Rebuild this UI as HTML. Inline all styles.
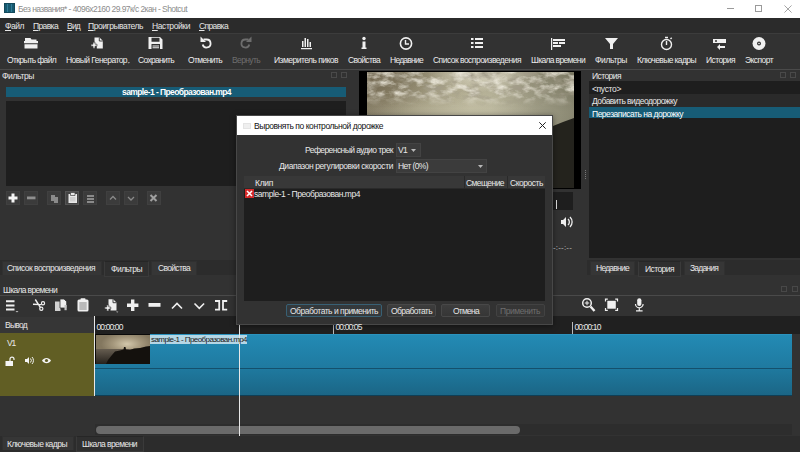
<!DOCTYPE html>
<html lang="ru"><head><meta charset="utf-8"><title>Shotcut</title>
<style>
html,body{margin:0;padding:0;}
body{width:800px;height:452px;overflow:hidden;position:relative;background:#323232;font-family:"Liberation Sans",sans-serif;font-size:9.5px;color:#dcdcdc;}
div,span,svg{position:absolute;box-sizing:border-box;}
.t{white-space:nowrap;line-height:14px;height:14px;}
u{text-decoration:underline;text-underline-offset:1px;}
#titlebar{left:0;top:0;width:800px;height:18px;background:#fff;}
#menubar{left:0;top:18px;width:800px;height:15px;background:#2b2b2b;}
#toolbar{left:0;top:33px;width:800px;height:37px;background:#323232;border-top:1px solid #3c3c3c;border-bottom:1px solid #4a4a4a;}
.dark{background:#1e1e1e;}
.sel{background:#175c76;}
.tab{background:#363636;border:1px solid #303030;border-bottom:none;}
.tabsel{background:#2f2f2f;border:1px solid #3a3a3a;border-top-color:#262626;}
.fbtn{top:191px;width:14px;height:14px;background:#3b3b3b;border:1px solid #404040;}
.btn{top:304px;height:13px;background:linear-gradient(#3d3d3d,#363636);border:1px solid #484848;border-radius:2px;}
.combo{background:#3b3b3b;border:1px solid #434343;}

</style></head><body>
<div id="titlebar"></div>
<!-- app icon -->
<div style="left:4px;top:3px;width:11px;height:10px;background:#185a70;border:1px solid #134a5c;"></div>
<div style="left:7px;top:4px;width:1px;height:8px;background:#2f7c98;"></div>
<div style="left:11px;top:4px;width:1px;height:8px;background:#2f7c98;"></div>
<!-- window controls -->
<div style="left:727px;top:8px;width:7px;height:1px;background:#9a9a9a;"></div>
<div style="left:755px;top:5px;width:7px;height:7px;border:1px solid #9a9a9a;"></div>
<svg style="left:784px;top:5px" width="8" height="8" viewBox="0 0 9 9"><path d="M0.5 0.5L8.5 8.5M8.5 0.5L0.5 8.5" stroke="#9a9a9a" stroke-width="1" fill="none"/></svg>
<div id="menubar"></div>
<div id="toolbar"></div>

<!-- toolbar icons -->
<svg id="tbicons" style="left:0;top:33px" width="800" height="37" viewBox="0 0 800 37">
<g fill="#f0f0f0" stroke="none">
 <!-- open file -->
 <path d="M25 5h5.500l1 1.500h5v1.500H25z"/><path d="M24 8h14v2.300H24zM24.500 11.300h13v4.200h-13z"/>
 <!-- new generator -->
 <path d="M94.500 4.500h5l3.300 3.300v7.700h-6v-3.300h-2.300z"/><path d="M99.300 4.500v3.500h3.500" fill="none" stroke="#323232" stroke-width="0.900"/><path d="M91 11.200h2v-2h2v2h2v2h-2v2h-2v-2h-2z" stroke="#323232" stroke-width="0.600"/><path d="M127.500 29.300h2.600l-1.300 1.300z" fill="#bbb"/>
 <!-- save -->
 <path d="M148.500 4h11.500l2.500 2.500v9.500h-14zM151.500 4.800v4h8v-4zM151.500 11v5h8.500v-5z" fill-rule="evenodd"/><path d="M152.500 12.500h6.500v1h-6.500zM152.500 14.300h6.500v1h-6.500z"/>
</g>
<g fill="none" stroke="#f0f0f0" stroke-width="1.8">
 <!-- undo -->
 <path d="M203.5 6.5h3a4 4 0 1 1 -3.8 5"/>
 <!-- clock -->
 <circle cx="406" cy="10.500" r="5.600" stroke-width="1.600"/>
 <path d="M405.500 7v4h3.500" stroke-width="1.400"/>
</g>
<path d="M200.500 3.500v5.500h5.500z" fill="#f0f0f0"/>
<g fill="none" stroke="#6e6e6e" stroke-width="1.800">
 <path d="M248.500 6.500h-3a4 4 0 1 0 3.800 5"/>
</g>
<path d="M251.500 3.500v5.500h-5.500z" fill="#6e6e6e"/>
<g fill="#f0f0f0">
 <!-- peak meter -->
 <path d="M302 8h1.500v6H302zM304.500 5h1.500v9h-1.500zM307 6h1.500v8H307zM309.500 9h1.500v5h-1.500zM301 15h11v1.300h-11z"/>
 <!-- info -->
 <circle cx="364" cy="5.500" r="1.700"/><path d="M362.500 8.500h3v6h1v1.500h-5v-1.500h1z"/>
 <!-- playlist -->
 <path d="M471 5h2.500v2H471zM475 5h8v2h-8zM471 9h2.500v2H471zM475 9h8v2h-8zM471 13h2.500v2H471zM475 13h8v2h-8z"/>
 <!-- timeline -->
 <path d="M551 5h1.200v12H551zM553 6h12v2h-12zM553 9h5v2h-5zM559 9h6v2h-6zM553 12h8v2h-8z"/>
 <!-- filter -->
 <path d="M605 5h13l-5 6v5h-3v-5z"/>
 <!-- history -->
 <path d="M713 6h13v4h-13zM720 11l-3 3l3 3v-2h5v-2h-5z"/>
 <circle cx="716" cy="8" r="1" fill="#323232"/>
 <!-- export disc -->
 <circle cx="759" cy="10.500" r="6.500"/>
</g>
<circle cx="759" cy="10.500" r="2" fill="#323232"/><circle cx="759" cy="10.500" r="0.800" fill="#f0f0f0"/>
<!-- keyframes stopwatch -->
<g fill="none" stroke="#f0f0f0" stroke-width="1.400">
 <circle cx="666.500" cy="11.500" r="5"/><path d="M666.500 8v4"/><path d="M665 4.500h3M670.500 6l1.200-1.200" />
</g>
</svg>

<!-- Filters panel -->
<div class="dark" style="left:6px;top:101px;width:340px;height:85px;"></div>
<div class="sel" style="left:6px;top:87px;width:340px;height:10px;"></div>
<div style="left:331px;top:72px;width:6px;height:6px;border:1px solid #4a4a4a;"></div>
<div style="left:341px;top:72px;width:6px;height:6px;border:1px solid #4a4a4a;"></div>
<!-- filter buttons -->
<div class="fbtn" style="left:6px;"></div>
<div class="fbtn" style="left:24px;"></div>
<div class="fbtn" style="left:47px;"></div>
<div class="fbtn" style="left:65px;background:#444;border-color:#555"></div>
<div class="fbtn" style="left:83px;"></div>
<div class="fbtn" style="left:106px;"></div>
<div class="fbtn" style="left:124px;"></div>
<div class="fbtn" style="left:147px;"></div>
<svg style="left:0;top:191px" width="170" height="14" viewBox="0 0 170 14">
 <path d="M11.500 2.500h3v3h3v3h-3v3h-3v-3h-3v-3h3z" fill="#f5f5f5"/>
 <path d="M27 5.500h8.500v2.800h-8.500z" fill="#8f8f8f"/>
 <path d="M51 4h4v6h-4zM54 6h4v6h-4z" fill="#8a8a8a"/>
 <path d="M68.500 3h8.500v9h-8.500z" fill="#e8e8e8"/><path d="M70.500 1.500h4.500v3h-4.500z" fill="#e8e8e8" stroke="#444" stroke-width="0.700"/><path d="M70 6h5.500v4.500h-5.500z" fill="#cfcfcf"/>
 <path d="M87 4h7v2h-7zM87 7h7v2h-7zM87 10h7v2h-7z" fill="#8a8a8a"/>
 <path d="M110 8.500l3-3l3 3" stroke="#8a8a8a" stroke-width="1.300" fill="none"/>
 <path d="M128 6l3 3l3-3" stroke="#8a8a8a" stroke-width="1.300" fill="none"/>
 <path d="M150.500 4l6 6M156.500 4l-6 6" stroke="#a0a0a0" stroke-width="2" fill="none"/>
</svg>
<!-- tabs left -->
<div style="left:0;top:260px;width:357px;height:15px;background:#2c2c2c;"></div>

<div class="tab" style="left:2px;top:261px;width:100px;height:14px;"></div>
<div class="tabsel" style="left:104px;top:261px;width:45px;height:16px;"></div>
<div class="tab" style="left:151px;top:261px;width:46px;height:14px;"></div>

<!-- video -->
<div style="left:359px;top:71px;width:222px;height:118px;background:#000;"></div>
<div id="sky" style="left:367px;top:72px;width:207px;height:116px;overflow:hidden;background:
 linear-gradient(180deg, rgba(40,30,10,.10) 0%, rgba(0,0,0,0) 22%, rgba(255,255,235,.06) 34%, rgba(255,255,235,.0) 100%),
 radial-gradient(ellipse 56px 20px at 116px 0px, #ebe7d4 0%, rgba(235,231,212,0) 100%),
 radial-gradient(ellipse 90px 22px at 85px 46px, rgba(200,196,170,.5) 0%, rgba(200,196,170,0) 100%),
 radial-gradient(ellipse 70px 50px at 0px 0px, rgba(110,98,76,.7) 0%, rgba(110,98,76,0) 100%),
 linear-gradient(90deg, #877f66 0%, #9a9378 20%, #b9b499 50%, #b7b399 60%, #9b9881 80%, #83816b 100%);">
 <svg style="left:0;top:0" width="207" height="116" viewBox="0 0 207 116">
  <defs>
   <filter id="cl" x="0" y="0" width="100%" height="100%"><feTurbulence type="fractalNoise" baseFrequency="0.07 0.14" numOctaves="4" seed="7"/><feColorMatrix type="matrix" values="0 0 0 0 0.36  0 0 0 0 0.33  0 0 0 0 0.25  2.6 0 0 0 -1.1"/></filter>
   <filter id="cl2" x="0" y="0" width="100%" height="100%"><feTurbulence type="fractalNoise" baseFrequency="0.08 0.15" numOctaves="4" seed="23"/><feColorMatrix type="matrix" values="0 0 0 0 0.84  0 0 0 0 0.81  0 0 0 0 0.71  0 2.2 0 0 -0.95"/></filter>
   <linearGradient id="fade" x1="0" y1="0" x2="0" y2="1"><stop offset="0" stop-color="#fff"/><stop offset="0.18" stop-color="#fff"/><stop offset="0.30" stop-color="#000"/></linearGradient>
   <mask id="mk"><rect width="207" height="116" fill="url(#fade)"/></mask>
  </defs>
  <g mask="url(#mk)"><rect width="207" height="116" filter="url(#cl)"/><rect width="207" height="116" filter="url(#cl2)"/></g>
  <path d="M207 46 L196 50 L186 54 L176 60 L160 66 L140 74 L120 82 L100 92 L90 116 L207 116z" fill="#24231d"/>
 </svg>
</div>
<!-- splitter dots -->
<div style="left:585px;top:170px;width:1px;height:10px;background:repeating-linear-gradient(#777 0 1px,transparent 1px 2px);"></div>

<!-- player bits right of dialog -->
<div style="left:553px;top:192px;width:20px;height:18px;background:#1e1e1e;"></div>
<div style="left:556px;top:200px;width:1px;height:9px;background:#ddd;"></div>
<svg style="left:560px;top:214px" width="16" height="16" viewBox="0 0 16 16"><path d="M1 6h2l3-3v10l-3-3H1z" fill="#eee"/><path d="M8 5a4 4 0 0 1 0 6M10 3a7 7 0 0 1 0 10" stroke="#eee" stroke-width="1.300" fill="none"/></svg>

<!-- History panel -->
<div class="dark" style="left:589px;top:81px;width:211px;height:177px;"></div>
<div style="left:589px;top:94px;width:211px;height:13px;background:#2a2a2a;"></div>
<div class="sel" style="left:589px;top:107px;width:211px;height:11px;"></div>
<div style="left:780px;top:72px;width:6px;height:6px;border:1px solid #4a4a4a;"></div>
<div style="left:790px;top:72px;width:6px;height:6px;border:1px solid #4a4a4a;"></div>
<div style="left:587px;top:260px;width:213px;height:15px;background:#2c2c2c;"></div>
<div class="tab" style="left:590px;top:261px;width:45px;height:14px;"></div>
<div class="tabsel" style="left:638px;top:261px;width:43px;height:16px;"></div>
<div class="tab" style="left:684px;top:261px;width:41px;height:14px;"></div>

<!-- Timeline -->
<div style="left:0;top:295px;width:800px;height:1px;background:#4a4a4a;"></div>
<div style="left:781px;top:286px;width:6px;height:6px;border:1px solid #484848;"></div>
<div style="left:792px;top:286px;width:6px;height:6px;border:1px solid #484848;"></div>
<svg style="left:0;top:297px" width="800" height="20" viewBox="0 0 800 20">
<g fill="#f0f0f0">
 <path d="M6 3.300h8.500v2H6zM6 7.500h8.500v2H6zM6 11.500h8.500v2H6z"/><path d="M15.500 14h3l-1.500 1.500z" fill="#bbb"/>
 <!-- copy -->
 <path d="M55 4.500h5.500v9.500H55z" fill="#d0d0d0"/><path d="M60 2h4l2.700 2.700V11h-6.700z" stroke="#323232" stroke-width="0.800"/><path d="M64.500 8h2.200v5.200h-2.200z" fill="#c4c4c4"/>
 <!-- paste -->
 <rect x="77.500" y="2.500" width="11" height="12" rx="1.500"/><rect x="79.300" y="5" width="7.400" height="8" fill="#b9b9b9"/><rect x="80.500" y="1.300" width="5" height="2.600" rx="0.800"/>
 <!-- append -->
 <path d="M108.500 2.200h4.700l3.300 3.300v8h-6v-3.500h-2z"/><path d="M113 2.200v3.500h3.500" fill="none" stroke="#323232" stroke-width="0.900"/>
 <path d="M104.800 10h2v-2h2v2h2v2h-2v2h-2v-2h-2z" stroke="#323232" stroke-width="0.600"/>
 <path d="M116 14.500h2.400l-1.200 1.200z" fill="#bbb"/>
 <!-- plus minus -->
 <path d="M131 2.500h3.400v4h4v3.400h-4v4h-3.400v-4h-4v-3.400h4z"/>
 <path d="M148.500 6h12v3.800h-12z"/>
</g>
<g fill="none" stroke="#f0f0f0" stroke-width="1.500">
 <!-- scissors -->
 <path d="M33 7.300L41.300 7.600M35.300 2.500L40.300 10.300" stroke-width="1.400"/><circle cx="43" cy="6.200" r="1.600" stroke-width="1.200"/><circle cx="41.300" cy="11.800" r="1.600" stroke-width="1.200"/>
 <path d="M172 11.500l5-5l5 5" stroke-width="1.600"/>
 <path d="M194.500 6.500l4.800 4.800l4.800-4.800" stroke-width="1.600"/>
 <path d="M215 4h4.200v8.700h-4.200M227.200 4h-4.200v8.700h4.200" stroke-width="1.800"/>
 <circle cx="587" cy="6" r="4.300"/><path d="M590.500 9.500l4 4.500" stroke-width="2.400"/><path d="M584.800 6h4.400M587 3.800v4.400" stroke-width="1"/>
 <path d="M605.500 4.500v-2.300h2.300M617.500 4.500v-2.300h-2.300M605.500 11v2.300h2.300M617.500 11v2.300h-2.300" stroke-width="1.200"/>
 <path d="M635.500 7a3.800 3.800 0 0 0 7.600 0M639.300 11v2.500M636 13.800h6.600" stroke-width="1.200"/>
</g>
<rect x="607.300" y="3.800" width="8.500" height="7.900" fill="#f0f0f0"/>
<rect x="637.200" y="1.200" width="4.200" height="7.800" rx="2.100" fill="#f0f0f0"/>
</svg>
<!-- ruler -->
<div style="left:95px;top:316px;width:705px;height:18px;background:#202020;"></div>
<div style="left:0;top:317px;width:94px;height:16px;background:#363636;"></div>
<div style="left:333px;top:322px;width:1px;height:12px;background:#bbb;"></div>
<div style="left:572px;top:322px;width:1px;height:12px;background:#bbb;"></div>
<!-- track header -->
<div style="left:0;top:333px;width:94px;height:63px;background:#615e24;"></div>
<svg style="left:0;top:352px" width="60" height="16" viewBox="0 0 60 16">
 <g fill="#f4f4f4"><path d="M5.500 9h7.500v5H5.500z"/><path d="M28 7h2l2-2v7l-2-2h-2z" transform="translate(-3,0)"/><path d="M42 8.500c2-3.500 7-3.500 9 0c-2 3.500-7 3.500-9 0z"/></g>
 <path d="M10 9v-1.800a2 2 0 0 1 4 0v0.800" stroke="#f4f4f4" stroke-width="1.200" fill="none"/>
 <path d="M30.500 6.500a3 3 0 0 1 0 4M32 5a5 5 0 0 1 0 7" stroke="#f4f4f4" stroke-width="1" fill="none"/>
 <circle cx="46.500" cy="8.500" r="1.600" fill="#615e24"/>
</svg>
<div style="left:94px;top:316px;width:1px;height:80px;background:#e8e8e8;"></div>
<!-- clip -->
<div style="left:95px;top:333.5px;width:697px;height:62.5px;background:linear-gradient(#238ab4 0%,#1f7ba1 52%,#1b6686 100%);border-top:1px solid #2b93be;border-bottom:1px solid #0f3f56;"></div>
<div style="left:95px;top:368px;width:697px;height:1px;background:#14506c;"></div>
<div style="left:95px;top:334px;width:55px;height:30px;background:#0a0a0a;"></div>
<div style="left:96px;top:335px;width:54px;height:29px;overflow:hidden;background:radial-gradient(ellipse 26px 12px at 31px 9px,#d2c7ab 0%,#a4977c 55%,#83775f 100%);">
 <svg style="left:0;top:0" width="54" height="29" viewBox="0 0 54 29"><defs><linearGradient id="sea" x1="0" y1="0" x2="0" y2="1"><stop offset="0" stop-color="#665d50"/><stop offset="1" stop-color="#26221d"/></linearGradient></defs><rect x="0" y="14" width="54" height="15" fill="url(#sea)"/><path d="M10 29L12 25L16 20L19 16.500L24 15.500L27.500 14.500L28 12L29.500 12L30 14.500L34 15L38 13.500L44 13L50 11.500L54 11V29z" fill="#14110d"/></svg>
</div>
<div style="left:150px;top:335px;width:97px;height:9px;background:rgba(214,232,240,.82);"></div>
<!-- scrollbar -->
<div style="left:95px;top:424px;width:697px;height:11px;background:#2d2d2d;"></div>
<div style="left:96px;top:426px;width:424px;height:8px;border-radius:4px;background:#6a6a6a;"></div>
<!-- bottom tabs -->
<div style="left:0;top:436px;width:800px;height:16px;background:#2c2c2c;"></div>

<div class="tab" style="left:2px;top:436px;width:72px;height:14px;"></div>
<div class="tabsel" style="left:76px;top:436px;width:68px;height:16px;"></div>
<!-- playhead -->
<div style="left:239px;top:318px;width:1px;height:118px;background:#e8e8e8;"></div>

<!-- Dialog -->
<div id="dlg" style="left:236px;top:115px;width:317px;height:210px;background:#323232;border:1px solid #484848;box-shadow:0 1px 6px rgba(0,0,0,.45);">
 <div style="left:0;top:0;width:315px;height:19px;background:#fff;"></div>
 <div style="left:6px;top:7px;width:8px;height:6px;background:#efefef;border:1px solid #e4e4e4;"></div>
 <svg style="left:302px;top:6px" width="7" height="7" viewBox="0 0 7 7"><path d="M0.300 0.300l6.400 6.400M6.700 0.300l-6.400 6.400" stroke="#222" stroke-width="1" fill="none"/></svg>
</div>
<div class="combo" style="left:396px;top:143px;width:25px;height:14px;"></div>
<div class="combo" style="left:396px;top:159px;width:91px;height:14px;"></div>
<svg style="left:411px;top:149px" width="5" height="3" viewBox="0 0 5 3"><path d="M0 0h5l-2.500 3z" fill="#b8b8b8"/></svg>
<svg style="left:478px;top:165px" width="5" height="3" viewBox="0 0 5 3"><path d="M0 0h5l-2.500 3z" fill="#b8b8b8"/></svg>
<!-- table -->
<div class="dark" style="left:244px;top:176px;width:301px;height:125px;"></div>
<div style="left:244px;top:176px;width:301px;height:13px;background:#383838;border-bottom:1px solid #2a2a2a;"></div>
<div style="left:464px;top:176px;width:1px;height:13px;background:#2a2a2a;"></div>
<div style="left:507px;top:176px;width:1px;height:13px;background:#2a2a2a;"></div>
<svg style="left:245px;top:189px" width="9" height="9" viewBox="0 0 9 9"><rect width="9" height="9" fill="#d42a2a"/><path d="M2 2l5 5M7 2l-5 5" stroke="#fff" stroke-width="1.600"/></svg>
<!-- buttons -->
<div class="btn" style="left:286px;width:96px;border-color:#386074;background:#34393c;"></div>
<div class="btn" style="left:387px;width:49px;"></div>
<div class="btn" style="left:441px;width:49px;"></div>
<div class="btn" style="left:496px;width:49px;background:#363636;border-color:#424242;"></div>

<span class="t" style="left:18px;top:1.5px;color:#8c8c8c;font-size:8.5px;letter-spacing:-0.561px;">Без названия* - 4096x2160 29.97к/с 2кан - Shotcut</span><span class="t" style="left:5px;top:18.5px;color:#e6e6e6;font-size:8.5px;letter-spacing:-0.477px;"><u>Ф</u>айл</span><span class="t" style="left:33px;top:18.5px;color:#e6e6e6;font-size:8.5px;letter-spacing:-0.620px;"><u>П</u>равка</span><span class="t" style="left:67px;top:18.5px;color:#e6e6e6;font-size:8.5px;letter-spacing:-0.797px;"><u>В</u>ид</span><span class="t" style="left:88px;top:18.5px;color:#e6e6e6;font-size:8.5px;letter-spacing:-0.450px;"><u>П</u>роигрыватель</span><span class="t" style="left:152px;top:18.5px;color:#e6e6e6;font-size:8.5px;letter-spacing:-0.410px;"><u>Н</u>астройки</span><span class="t" style="left:199px;top:18.5px;color:#e6e6e6;font-size:8.5px;letter-spacing:-0.623px;"><u>С</u>правка</span><span class="t" style="left:7px;top:52.5px;color:#ececec;font-size:8.5px;letter-spacing:-0.681px;">Открыть файл</span><span class="t" style="left:66px;top:52.5px;color:#ececec;font-size:8.5px;letter-spacing:-0.554px;">Новый Генератор</span><span class="t" style="left:138px;top:52.5px;color:#ececec;font-size:8.5px;letter-spacing:-0.694px;">Сохранить</span><span class="t" style="left:188px;top:52.5px;color:#ececec;font-size:8.5px;letter-spacing:-0.605px;">Отменить</span><span class="t" style="left:232px;top:52.5px;color:#6e6e6e;font-size:8.5px;letter-spacing:-0.627px;">Вернуть</span><span class="t" style="left:274px;top:52.5px;color:#ececec;font-size:8.5px;letter-spacing:-0.529px;">Измеритель пиков</span><span class="t" style="left:348px;top:52.5px;color:#ececec;font-size:8.5px;letter-spacing:-0.666px;">Свойства</span><span class="t" style="left:390px;top:52.5px;color:#ececec;font-size:8.5px;letter-spacing:-0.758px;">Недавние</span><span class="t" style="left:433px;top:52.5px;color:#ececec;font-size:8.5px;letter-spacing:-0.520px;">Список воспроизведения</span><span class="t" style="left:531px;top:52.5px;color:#ececec;font-size:8.5px;letter-spacing:-0.651px;">Шкала времени</span><span class="t" style="left:595px;top:52.5px;color:#ececec;font-size:8.5px;letter-spacing:-0.382px;">Фильтры</span><span class="t" style="left:637px;top:52.5px;color:#ececec;font-size:8.5px;letter-spacing:-0.600px;">Ключевые кадры</span><span class="t" style="left:706px;top:52.5px;color:#ececec;font-size:8.5px;letter-spacing:-0.567px;">История</span><span class="t" style="left:745px;top:52.5px;color:#ececec;font-size:8.5px;letter-spacing:-0.562px;">Экспорт</span><span class="t" style="left:2px;top:69.0px;color:#e8e8e8;font-size:8.5px;letter-spacing:-0.382px;">Фильтры</span><span class="t" style="left:122px;top:85.0px;color:#ffffff;font-size:8.5px;letter-spacing:-0.590px;font-weight:bold;">sample-1 - Преобразован.mp4</span><span class="t" style="left:592px;top:69.0px;color:#e8e8e8;font-size:8.5px;letter-spacing:-0.567px;">История</span><span class="t" style="left:592px;top:81.5px;color:#e8e8e8;font-size:8.5px;letter-spacing:-0.353px;">&lt;пусто&gt;</span><span class="t" style="left:592px;top:94.0px;color:#e8e8e8;font-size:8.5px;letter-spacing:-0.534px;">Добавить видеодорожку</span><span class="t" style="left:592px;top:106.5px;color:#ffffff;font-size:8.5px;letter-spacing:-0.484px;">Перезаписать на дорожку</span><span class="t" style="left:7px;top:261.0px;color:#e8e8e8;font-size:8.5px;letter-spacing:-0.520px;">Список воспроизведения</span><span class="t" style="left:111px;top:261.5px;color:#e8e8e8;font-size:8.5px;letter-spacing:-0.525px;">Фильтры</span><span class="t" style="left:158px;top:261.0px;color:#e8e8e8;font-size:8.5px;letter-spacing:-0.666px;">Свойства</span><span class="t" style="left:596px;top:261.0px;color:#e8e8e8;font-size:8.5px;letter-spacing:-0.758px;">Недавние</span><span class="t" style="left:645px;top:261.5px;color:#e8e8e8;font-size:8.5px;letter-spacing:-0.567px;">История</span><span class="t" style="left:690px;top:261.0px;color:#e8e8e8;font-size:8.5px;letter-spacing:-0.799px;">Задания</span><span class="t" style="left:3px;top:283.0px;color:#e8e8e8;font-size:8.5px;letter-spacing:-0.651px;">Шкала времени</span><span class="t" style="left:5px;top:317.5px;color:#e8e8e8;font-size:8.5px;letter-spacing:-0.741px;">Вывод</span><span class="t" style="left:7px;top:335.5px;color:#e8e8e8;font-size:8.5px;letter-spacing:-1.203px;">V1</span><span class="t" style="left:96.5px;top:320.0px;color:#e8e8e8;font-size:8.5px;letter-spacing:-0.887px;">00:00:00</span><span class="t" style="left:335.5px;top:320.0px;color:#e8e8e8;font-size:8.5px;letter-spacing:-0.887px;">00:00:05</span><span class="t" style="left:574.5px;top:320.0px;color:#e8e8e8;font-size:8.5px;letter-spacing:-0.887px;">00:00:10</span><span class="t" style="left:151px;top:332.5px;color:#1a1a1a;font-size:8px;letter-spacing:-0.568px;">sample-1 - Преобразован.mp4</span><span class="t" style="left:7px;top:436.5px;color:#e8e8e8;font-size:8.5px;letter-spacing:-0.529px;">Ключевые кадры</span><span class="t" style="left:82px;top:437.0px;color:#e8e8e8;font-size:8.5px;letter-spacing:-0.575px;">Шкала времени</span><span class="t" style="left:254px;top:118.5px;color:#111111;font-size:8.5px;letter-spacing:-0.438px;">Выровнять по контрольной дорожке</span><span class="t" style="left:305px;top:143.0px;color:#e8e8e8;font-size:8.5px;letter-spacing:-0.570px;">Референсный аудио трек</span><span class="t" style="left:279px;top:159.0px;color:#e8e8e8;font-size:8.5px;letter-spacing:-0.425px;">Диапазон регулировки скорости</span><span class="t" style="left:398px;top:143.0px;color:#e8e8e8;font-size:8.5px;letter-spacing:-0.703px;">V1</span><span class="t" style="left:398px;top:159.0px;color:#e8e8e8;font-size:8.5px;letter-spacing:-0.600px;">Нет (0%)</span><span class="t" style="left:255px;top:175.5px;color:#e8e8e8;font-size:8.5px;letter-spacing:-0.316px;">Клип</span><span class="t" style="left:466px;top:175.5px;color:#e8e8e8;font-size:8.5px;letter-spacing:-0.564px;">Смещение</span><span class="t" style="left:510px;top:175.5px;color:#e8e8e8;font-size:8.5px;letter-spacing:-0.465px;">Скорость</span><span class="t" style="left:254px;top:187.0px;color:#e8e8e8;font-size:8.5px;letter-spacing:-0.456px;">sample-1 - Преобразован.mp4</span><span class="t" style="left:290px;top:303.5px;color:#e6e6e6;font-size:8.5px;letter-spacing:-0.495px;">Обработать и применить</span><span class="t" style="left:391px;top:303.5px;color:#e6e6e6;font-size:8.5px;letter-spacing:-0.602px;">Обработать</span><span class="t" style="left:453px;top:303.5px;color:#e6e6e6;font-size:8.5px;letter-spacing:-0.750px;">Отмена</span><span class="t" style="left:500px;top:303.5px;color:#6e6e6e;font-size:8.5px;letter-spacing:-0.436px;">Применить</span><span class="t" style="left:553px;top:241.0px;color:#bdbdbd;font-size:8px;letter-spacing:0.176px;">-:--:--</span>
</body></html>
